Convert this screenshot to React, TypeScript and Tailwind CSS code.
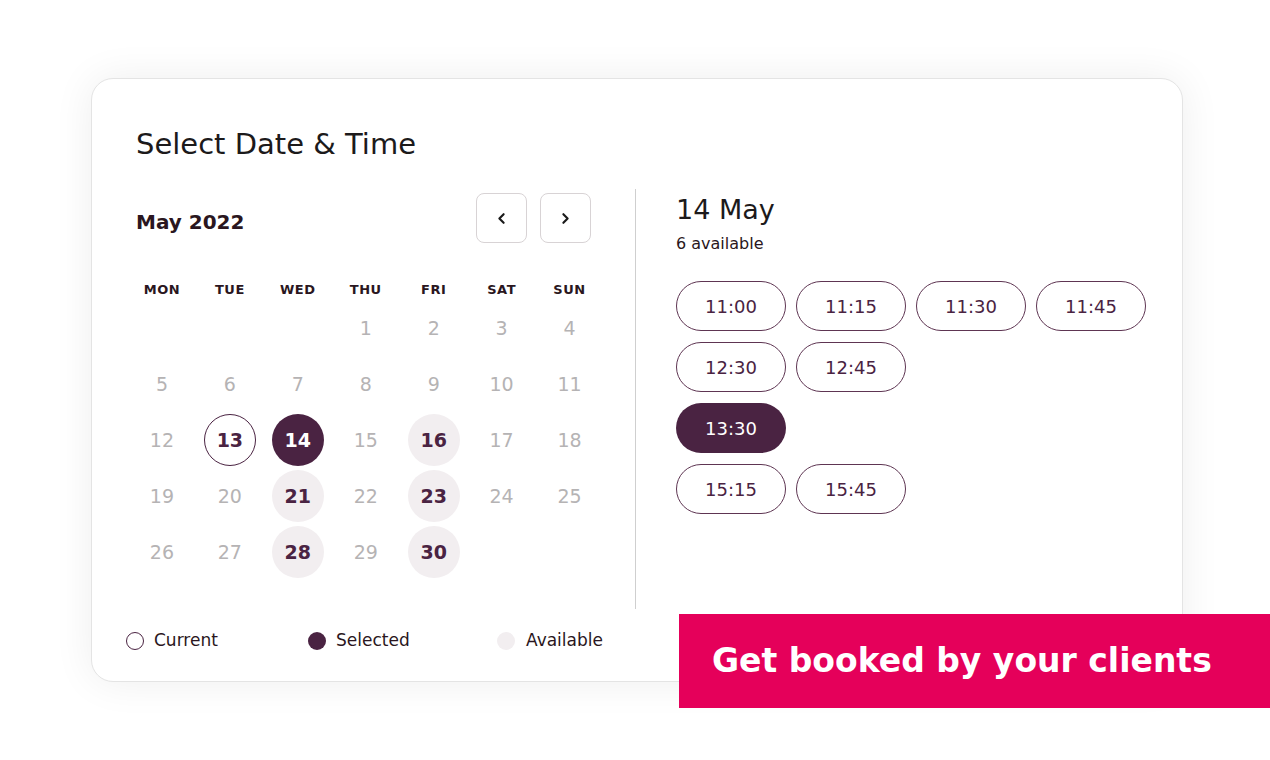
import React from 'react';
import { ChevronLeft, ChevronRight } from 'lucide-react';

type DayState = 'muted' | 'current' | 'selected' | 'available';

const WEEKDAYS = ['MON', 'TUE', 'WED', 'THU', 'FRI', 'SAT', 'SUN'];

const CURRENT = 13;
const SELECTED = 14;
const AVAILABLE = [16, 21, 23, 28, 30];

const TIMES = [
  ['11:00', '11:15', '11:30', '11:45'],
  ['12:30', '12:45'],
  ['13:30'],
  ['15:15', '15:45'],
];

const getDayState = (day: number): DayState => {
  if (day === CURRENT) return 'current';
  if (day === SELECTED) return 'selected';
  if (AVAILABLE.includes(day)) return 'available';
  return 'muted';
};

const dayClass = (state: DayState): string => {
  switch (state) {
    case 'current':
      return 'border-[1.5px] border-[#4a2342] text-[#4a2342] font-bold';
    case 'selected':
      return 'bg-[#4a2342] text-white font-bold';
    case 'available':
      return 'bg-[#f2eef0] text-[#4a2342] font-bold';
    default:
      return 'text-[#b5b3b4] font-medium';
  }
};

// the 1st sits under THU, so three blanks first
const cells: (number | null)[] = [null, null, null, ...Array.from({ length: 30 }, (_, i) => i + 1)];

const font = { fontFamily: '"DejaVu Sans", "Noto Sans", sans-serif' };

export default function App() {
  return (
    <div className="relative min-h-[760px] w-[1270px] overflow-hidden bg-white" style={font}>
      <div className="pl-[91px] pt-[78px]">
        <div className="w-[1092px] rounded-[22px] border-[1.5px] border-[#e4e4e4] bg-white px-[36px] pt-[47px] pb-[28px] shadow-[0_0_40px_rgba(0,0,0,0.07)]">
          <h1 className="pl-2 text-[29px] leading-[36px] text-[#1c1a1b]">Select Date &amp; Time</h1>

          <div className="mt-[27px] flex h-[420px]">
            {/* calendar */}
            <div className="w-[476px]">
              <div className="mt-1 flex h-[50px] items-center justify-between pl-2 pr-[13px]">
                <span className="pt-2 text-[20px] font-bold text-[#2a1620]">May 2022</span>
                <div className="flex gap-[13px]">
                  <button className="flex h-[50px] w-[51px] items-center justify-center rounded-[8px] border-[1.5px] border-[#d8d3d5] bg-white">
                    <ChevronLeft size={17} strokeWidth={3} className="text-[#1a1a1a]" />
                  </button>
                  <button className="flex h-[50px] w-[51px] items-center justify-center rounded-[8px] border-[1.5px] border-[#d8d3d5] bg-white">
                    <ChevronRight size={17} strokeWidth={3} className="text-[#1a1a1a]" />
                  </button>
                </div>
              </div>

              <div className="mt-[37px] grid h-5 grid-cols-7 items-center">
                {WEEKDAYS.map((d) => (
                  <span key={d} className="text-center text-[13px] font-bold tracking-[0.04em] text-[#2a1620]">
                    {d}
                  </span>
                ))}
              </div>

              <div className="grid grid-cols-7 auto-rows-[56px]">
                {cells.map((day, i) => (
                  <div key={i} className="flex items-center justify-center">
                    {day !== null && (
                      <span
                        className={`flex h-[52px] w-[52px] items-center justify-center rounded-full text-[19px] ${dayClass(getDayState(day))}`}
                      >
                        {day}
                      </span>
                    )}
                  </div>
                ))}
              </div>
            </div>

            {/* divider */}
            <div className="ml-[31px] w-[1.5px] bg-[#cfcfcf]" />

            {/* time slots */}
            <div className="pl-[40px]">
              <h2 className="mt-[4px] text-[27px] leading-[34px] text-[#1c1a1b]">14 May</h2>
              <p className="mt-[6px] text-[16px] leading-[22px] text-[#2a1620]">6 available</p>
              <div className="mt-[26px] flex flex-col gap-[11px]">
                {TIMES.map((row, r) => (
                  <div key={r} className="flex gap-[10px]">
                    {row.map((t) => (
                      <button
                        key={t}
                        className={`h-[50px] w-[110px] rounded-full text-[18px] ${
                          t === '13:30'
                            ? 'bg-[#4a2342] text-white'
                            : 'border-[1.5px] border-[#5e3552] bg-white text-[#4a2342]'
                        }`}
                      >
                        {t}
                      </button>
                    ))}
                  </div>
                ))}
              </div>
            </div>
          </div>

          {/* legend */}
          <div className="mt-[20px] flex h-6 items-center text-[17px] text-[#2a1620]">
            <div className="-ml-0.5 flex w-[182px] items-center gap-[10px]">
              <span className="h-[18px] w-[18px] rounded-full border-[1.5px] border-[#4a2342]" />
              Current
            </div>
            <div className="flex w-[189px] items-center gap-[10px]">
              <span className="h-[18px] w-[18px] rounded-full bg-[#4a2342]" />
              Selected
            </div>
            <div className="flex items-center gap-[11px]">
              <span className="h-[18px] w-[18px] rounded-full bg-[#f2eef0]" />
              Available
            </div>
          </div>
        </div>
      </div>

      <div className="absolute left-[679px] top-[614px] flex h-[94px] w-[591px] items-center bg-[#e5005a] pl-[33px]">
        <span className="text-[33px] font-bold text-white">Get booked by your clients</span>
      </div>
    </div>
  );
}
